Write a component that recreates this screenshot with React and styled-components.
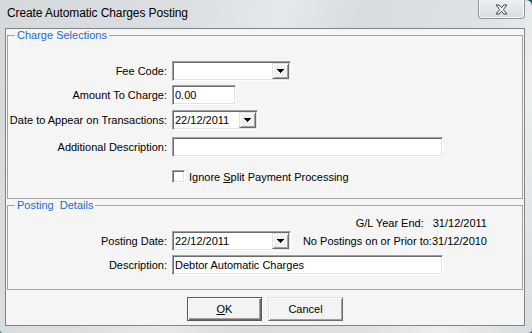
import React from "react";
import styled, { createGlobalStyle } from "styled-components";

const GlobalStyle = createGlobalStyle`
  html, body { margin: 0; padding: 0; background: #245f5c; }
  body { font-family: "Liberation Sans", Arial, sans-serif; font-size: 11px; color: #000; }
  * { box-sizing: border-box; }
`;

const Window = styled.div`
  width: 532px;
  height: 333px;
  display: flex;
  flex-direction: column;
  background: linear-gradient(110deg, #d6d9dc 0%, #dcdfe2 30%, #e6e9eb 44%, #d8dcdf 56%, #dde1e3 74%, #eceeef 86%, #d7dcde 100%);
  border-top-right-radius: 6px;
  border-bottom-left-radius: 3px;
  border-bottom-right-radius: 4px;
  overflow: hidden;
`;

const TitleBar = styled.div`
  height: 28px;
  display: flex;
  align-items: flex-start;
  padding-left: 7px;
  flex-shrink: 0;
`;

const Title = styled.div`
  align-self: center;
  font-size: 12px;
  letter-spacing: -0.1px;
  color: #000;
  margin-top: -2px;
`;

const CloseButton = styled.div`
  margin-left: auto;
  margin-right: 7px;
  width: 47px;
  height: 19px;
  border: 1px solid #8e9397;
  border-top: none;
  border-radius: 0 0 4px 4px;
  background: linear-gradient(#eef0f1, #e2e5e7 55%, #d9dcde);
  box-shadow: inset 1px 0 0 #f7f8f8, inset -1px 0 0 #f7f8f8, inset 0 -1px 0 #f4f5f6;
  display: flex;
  align-items: center;
  justify-content: center;
`;

const Frame = styled.div`
  flex: 1;
  display: flex;
  padding: 0 7px 7px 5px;
`;

const Client = styled.div`
  flex: 1;
  display: flex;
  flex-direction: column;
  border: 1px solid #808387;
  background: #f5f5f5;
  padding: 0 1px;
`;

const Group = styled.fieldset`
  margin: 0;
  padding: 0;
  min-width: 0;
  border: 1px solid #a3a3a3;
`;

const Legend = styled.legend`
  margin-left: 7px;
  padding: 0 2px;
  line-height: 12px;
  font-size: 11px;
  color: #1b6ccc;
  white-space: pre;
`;

const GroupBody = styled.div`
  display: flex;
  flex-direction: column;
  padding-top: ${(p) => p.$pt}px;
  padding-bottom: ${(p) => p.$pb}px;
`;

const Row = styled.div`
  display: flex;
  align-items: center;
  height: ${(p) => p.$h || 20}px;
  margin-top: ${(p) => p.$mt || 0}px;
  padding-left: ${(p) => p.$indent || 0}px;
`;

const Label = styled.label`
  width: 159px;
  flex-shrink: 0;
  margin-right: 5px;
  text-align: right;
  white-space: nowrap;
`;

const sunken = `
  border: 1px solid;
  border-color: #a0a0a0 #ffffff #ffffff #a0a0a0;
  box-shadow: inset 1px 1px 0 #6b6b6b, inset -1px -1px 0 #e3e3e3;
  background: #fff;
`;

const TextBox = styled.div`
  ${sunken}
  width: ${(p) => p.$w}px;
  height: 20px;
  flex-shrink: 0;
  display: flex;
  align-items: center;
  padding: 0 2px;
  white-space: nowrap;
  overflow: hidden;
`;

const Combo = styled.div`
  ${sunken}
  width: ${(p) => p.$w}px;
  height: 20px;
  flex-shrink: 0;
  display: flex;
  align-items: center;
  padding: 1px 1px 1px 2px;
`;

const ComboText = styled.span`
  flex: 1;
  white-space: nowrap;
  overflow: hidden;
`;

const DropButton = styled.div`
  width: 17px;
  height: 16px;
  flex-shrink: 0;
  background: #f0f0f0;
  border: 1px solid;
  border-color: #e3e3e3 #6b6b6b #6b6b6b #e3e3e3;
  box-shadow: inset 1px 1px 0 #ffffff, inset -1px -1px 0 #a0a0a0;
  display: flex;
  align-items: center;
  justify-content: center;
`;

const CheckBox = styled.div`
  ${sunken}
  width: 13px;
  height: 13px;
  flex-shrink: 0;
`;

const CheckLabel = styled.span`
  margin-left: 4px;
  white-space: nowrap;
`;

const Info = styled.div`
  width: 191px;
  flex-shrink: 0;
  margin-left: ${(p) => p.$ml}px;
  text-align: right;
  white-space: nowrap;
`;

const InfoValue = styled.span`
  margin-left: ${(p) => p.$gap || 0}px;
`;

const ButtonBar = styled.div`
  flex: 1;
  display: flex;
  justify-content: center;
  align-items: flex-start;
  gap: 6px;
  padding-top: 7px;
`;

const Button = styled.div`
  width: 75px;
  height: 24px;
  display: flex;
  align-items: center;
  justify-content: center;
  background: #f3f3f3;
  border: 1px solid;
  border-color: ${(p) => (p.$default ? "#5a5a5a" : "#dedede #6b6b6b #6b6b6b #dedede")};
  box-shadow: ${(p) =>
    p.$default
      ? "inset 1px 1px 0 #ffffff, inset -1px -1px 0 #6b6b6b, inset -2px -2px 0 #a0a0a0"
      : "inset 1px 1px 0 #ffffff, inset -1px -1px 0 #a0a0a0"};
  color: #000;
`;

const Arrow = () => (
  <svg width="7" height="4" viewBox="0 0 7 4" shapeRendering="crispEdges">
    <path d="M0 0H7V1H6V2H5V3H4V4H3V3H2V2H1V1H0Z" fill="#000" />
  </svg>
);

const CloseGlyph = () => (
  <svg width="13" height="11" viewBox="0 0 13 11">
    <path
      d="M1 1H4.2L6.5 3.8L8.8 1H12L8.3 5.5L12 10H8.8L6.5 7.2L4.2 10H1L4.7 5.5Z"
      fill="#fbfbfb"
      stroke="#3f4346"
      strokeWidth="1"
      strokeLinejoin="round"
    />
  </svg>
);

const ComboBox = ({ w, value }) => (
  <Combo $w={w}>
    <ComboText>{value}</ComboText>
    <DropButton>
      <Arrow />
    </DropButton>
  </Combo>
);

export default function App() {
  return (
    <>
      <GlobalStyle />
      <Window>
        <TitleBar>
          <Title>Create Automatic Charges Posting</Title>
          <CloseButton>
            <CloseGlyph />
          </CloseButton>
        </TitleBar>
        <Frame>
          <Client>
            <Group>
              <Legend>Charge Selections</Legend>
              <GroupBody $pt={20} $pb={15}>
                <Row>
                  <Label>Fee Code:</Label>
                  <ComboBox w={119} value="" />
                </Row>
                <Row $mt={4}>
                  <Label>Amount To Charge:</Label>
                  <TextBox $w={64}>0.00</TextBox>
                </Row>
                <Row $mt={5}>
                  <Label>Date to Appear on Transactions:</Label>
                  <ComboBox w={86} value="22/12/2011" />
                </Row>
                <Row $mt={7}>
                  <Label>Additional Description:</Label>
                  <TextBox $w={271} />
                </Row>
                <Row $mt={13} $h={13} $indent={164}>
                  <CheckBox />
                  <CheckLabel>
                    Ignore <u>S</u>plit Payment Processing
                  </CheckLabel>
                </Row>
              </GroupBody>
            </Group>
            <Group>
              <Legend>{"Posting  Details"}</Legend>
              <GroupBody $pt={0} $pb={14}>
                <Row $mt={5} $h={14}>
                  <Info $ml={288}>
                    G/L Year End:<InfoValue $gap={9}>31/12/2011</InfoValue>
                  </Info>
                </Row>
                <Row $mt={1}>
                  <Label>Posting Date:</Label>
                  <ComboBox w={119} value="22/12/2011" />
                  <Info $ml={5}>
                    No Postings on or Prior to:<InfoValue>31/12/2010</InfoValue>
                  </Info>
                </Row>
                <Row $mt={4}>
                  <Label>Description:</Label>
                  <TextBox $w={271}>Debtor Automatic Charges</TextBox>
                </Row>
              </GroupBody>
            </Group>
            <ButtonBar>
              <Button $default>
                <span>
                  <u>O</u>K
                </span>
              </Button>
              <Button>Cancel</Button>
            </ButtonBar>
          </Client>
        </Frame>
      </Window>
    </>
  );
}
